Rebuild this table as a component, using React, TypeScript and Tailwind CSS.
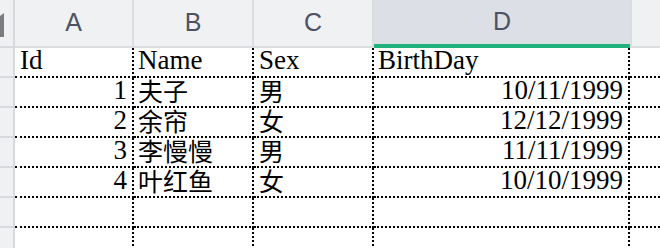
const columns = ["A", "B", "C", "D"];

type Row = { id: string; name: string; sex: string; birthday: string };

const rows: Row[] = [
  { id: "1", name: "夫子", sex: "男", birthday: "10/11/1999" },
  { id: "2", name: "余帘", sex: "女", birthday: "12/12/1999" },
  { id: "3", name: "李慢慢", sex: "男", birthday: "11/11/1999" },
  { id: "4", name: "叶红鱼", sex: "女", birthday: "10/10/1999" },
];

const cell =
  "h-[30px] flex items-end pb-[3px] leading-[26px] bg-white border-black border-dotted border-b-2 whitespace-nowrap";
const cjk = "text-[25px] leading-[25px] [font-family:'Noto_Sans_CJK_SC',sans-serif]";
const stripCell = "h-[30px] bg-[#f0f1f3] border-r-2 border-b-2 border-[#d8d9dc]";

export default function App() {
  return (
    <div className="w-[660px] h-[248px] overflow-hidden bg-white text-black text-[27px] [font-family:'Liberation_Serif',serif]">
      <div className="grid grid-cols-[15px_119px_120px_120px_256px_1fr]">
        {/* column headers */}
        <div className="h-[48px] bg-[#f0f1f3] border-r-2 border-b-2 border-[#d8d9dc] relative">
          <svg className="absolute left-0 top-[13px]" width="4" height="24" viewBox="0 0 4 24">
            <polygon points="0,3 4,0 4,24 0,24" fill="#7b7c7f" />
          </svg>
        </div>
        {columns.map((c) => (
          <div
            key={c}
            className={
              c === "D"
                ? "h-[48px] flex items-center justify-center bg-[#dcdfe6] border-b-4 border-[#1fb27a] text-[25px] text-[#4b5264] [font-family:'Liberation_Sans',sans-serif]"
                : "h-[48px] flex items-center justify-center bg-[#f0f1f3] border-r-2 border-b-2 border-[#dcdde0] text-[25px] text-[#4b5264] [font-family:'Liberation_Sans',sans-serif]"
            }
          >
            {c}
          </div>
        ))}
        <div className="h-[48px] bg-[#f0f1f3] border-l-2 border-b-2 border-[#dcdde0]" />

        {/* field names */}
        <div className={stripCell} />
        <div className={`${cell} border-r-2 pl-[5px]`}>Id</div>
        <div className={`${cell} border-r-2 pl-1`}>Name</div>
        <div className={`${cell} border-r-2 pl-[5px]`}>Sex</div>
        <div className={`${cell} border-r-2 pl-1`}>BirthDay</div>
        <div className={cell} />

        {rows.map((r) => (
          <div key={r.id} className="contents">
            <div className={stripCell} />
            <div className={`${cell} border-r-2 justify-end pr-[5px]`}>{r.id}</div>
            <div className={`${cell} border-r-2 pl-1`}>
              <span className={cjk}>{r.name}</span>
            </div>
            <div className={`${cell} border-r-2 pl-[5px]`}>
              <span className={cjk}>{r.sex}</span>
            </div>
            <div className={`${cell} border-r-2 justify-end pr-[5px]`}>{r.birthday}</div>
            <div className={cell} />
          </div>
        ))}

        {/* empty rows */}
        {[0, 1].map((i) => (
          <div key={i} className="contents">
            <div className={stripCell} />
            <div className={`${cell} border-r-2`} />
            <div className={`${cell} border-r-2`} />
            <div className={`${cell} border-r-2`} />
            <div className={`${cell} border-r-2`} />
            <div className={cell} />
          </div>
        ))}
      </div>
    </div>
  );
}
